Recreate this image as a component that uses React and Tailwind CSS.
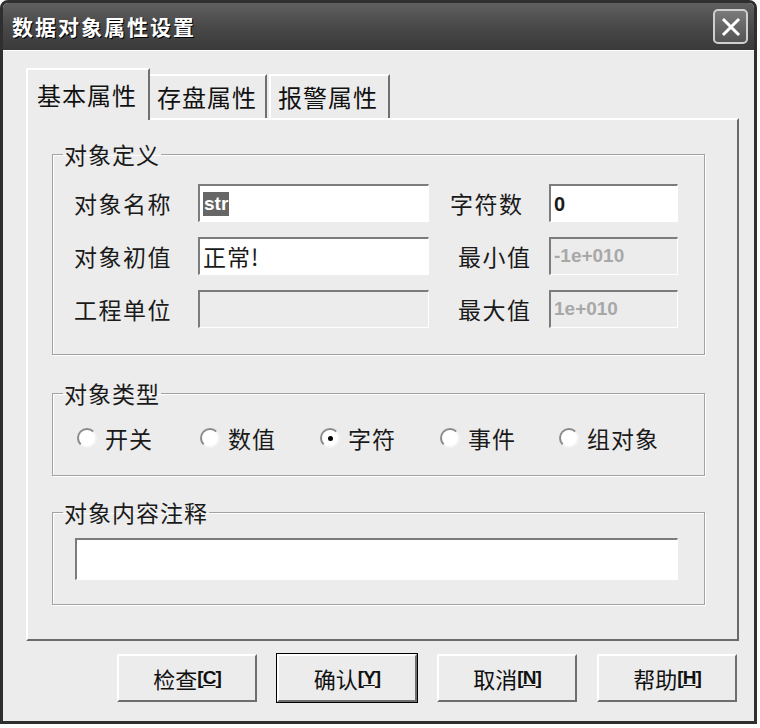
import React from "react";

const cjk = "font-['Noto_Sans_CJK_SC','Noto_Sans',sans-serif]";
const latin = "font-['Liberation_Sans','Noto_Sans_CJK_SC',sans-serif]";

function Field({ width, disabled, children }) {
  return (
    <div
      className={`h-[38px] ${width} flex items-center pl-[3px] border-t-2 border-l-2 border-t-[#7c7c7c] border-l-[#7c7c7c] border-b border-r border-b-white border-r-white ${disabled ? "bg-[#ececec]" : "bg-white"}`}
    >
      {children}
    </div>
  );
}

function Group({ title, className = "", inner = "", children }) {
  return (
    <fieldset
      className={`p-0 border border-[#a2a2a2] shadow-[inset_1px_1px_0_#ffffff,1px_1px_0_#ffffff] ${className}`}
    >
      <legend className="ml-[10px] px-[1px] text-[23px] leading-[28px] tracking-[1px] text-[#1a1a1a]">
        {title}
      </legend>
      <div className={inner}>{children}</div>
    </fieldset>
  );
}

function Radio({ checked, label }) {
  return (
    <div className="flex items-center gap-[8px]">
      <span className="w-[20px] h-[20px] rounded-full bg-white border-2 border-t-[#8a8a8a] border-l-[#8a8a8a] border-r-[#f4f4f4] border-b-[#f4f4f4] flex items-center justify-center">
        {checked && <span className="w-[5px] h-[5px] rounded-full bg-black" />}
      </span>
      <span className="text-[23px] tracking-[1px]">{label}</span>
    </div>
  );
}

function Btn({ label, hot, isDefault }) {
  return (
    <div className={isDefault ? "border border-black" : "border border-transparent"}>
      <div className="w-[140px] h-[48px] flex items-center justify-center bg-[#ececec] border-t-2 border-l-2 border-t-white border-l-white border-b-2 border-r-2 border-b-[#6e6e6e] border-r-[#6e6e6e] text-[22px] text-[#111]">
        <span>{label}</span>
        <span className={`${latin} font-bold text-[19px] tracking-[-1px]`}>
          [<span className="underline">{hot}</span>]
        </span>
      </div>
    </div>
  );
}

export default function App() {
  return (
    <div className={`w-[760px] h-[728px] bg-white ${cjk}`}>
      <div className="w-[757px] h-[724px] flex flex-col border-[3px] border-[#2f2f2f] rounded-t-[8px] overflow-hidden bg-[#ececec]">
        {/* title bar */}
        <div className="h-[47px] shrink-0 flex items-center justify-between pl-[9px] pr-[6px] bg-gradient-to-b from-[#606060] via-[#494949] to-[#3a3a3a]">
          <span className="text-white font-bold text-[21px] tracking-[2px] [text-shadow:1px_1px_0_#000000]">
            数据对象属性设置
          </span>
          <div className="w-[35px] h-[35px] rounded-[5px] border-2 border-[#cfcfcf] bg-gradient-to-b from-[#7a7a7a] to-[#545454] flex items-center justify-center">
            <svg width="22" height="22" viewBox="0 0 22 22">
              <path d="M4 4 L18 18 M18 4 L4 18" stroke="#ffffff" strokeWidth="3" strokeLinecap="square" />
            </svg>
          </div>
        </div>

        {/* body */}
        <div className="flex-1 flex flex-col border-t border-t-white pl-[23px] pr-[16px] pt-[17px]">
          {/* tabs */}
          <div className="flex items-end h-[50px] relative z-10">
            <div className="h-[52px] -mb-[2px] w-[124px] bg-[#ececec] border-t-2 border-l-2 border-t-white border-l-white border-r-2 border-r-[#707070] flex items-center pl-[9px] text-[24px] tracking-[1px] text-[#111]">
              基本属性
            </div>
            <div className="h-[44px] w-[117px] bg-[#ececec] border-t-2 border-t-white border-r-2 border-r-[#707070] flex items-center pl-[7px] text-[24px] tracking-[1px] text-[#111]">
              存盘属性
            </div>
            <div className="h-[44px] w-[121px] ml-[2px] bg-[#ececec] border-t-2 border-l-2 border-t-white border-l-white border-r-2 border-r-[#707070] flex items-center pl-[7px] text-[24px] tracking-[1px] text-[#111]">
              报警属性
            </div>
          </div>

          {/* panel */}
          <div className="w-[713px] h-[523px] border-t-2 border-l-2 border-t-white border-l-white border-b-2 border-r-2 border-b-[#6a6a6a] border-r-[#6a6a6a] pl-[24px] pt-[20px] text-[#1a1a1a]">
            <Group title="对象定义" className="w-[653px] h-[215px]" inner="pl-[21px] pt-[16px]">
              <div className="flex flex-col gap-[15px]">
                <div className="flex items-center">
                  <span className="w-[124px] text-[23px] tracking-[1.5px]">对象名称</span>
                  <Field width="w-[231px]">
                    <span className={`${latin} font-bold text-[19px] leading-[24px] px-[1px] bg-[#666666] text-white`}>str</span>
                  </Field>
                  <span className="w-[120px] pl-[21px] text-[23px] tracking-[1.5px]">字符数</span>
                  <Field width="w-[129px]">
                    <span className={`${latin} font-bold text-[20px]`}>0</span>
                  </Field>
                </div>
                <div className="flex items-center">
                  <span className="w-[124px] text-[23px] tracking-[1.5px]">对象初值</span>
                  <Field width="w-[231px]">
                    <span className="text-[23px] tracking-[1px]">正常!</span>
                  </Field>
                  <span className="w-[120px] pl-[29px] text-[23px] tracking-[1.5px]">最小值</span>
                  <Field width="w-[129px]" disabled>
                    <span className={`${latin} font-bold text-[19px] text-[#a8a8a8]`}>-1e+010</span>
                  </Field>
                </div>
                <div className="flex items-center">
                  <span className="w-[124px] text-[23px] tracking-[1.5px]">工程单位</span>
                  <Field width="w-[231px]" disabled />
                  <span className="w-[120px] pl-[29px] text-[23px] tracking-[1.5px]">最大值</span>
                  <Field width="w-[129px]" disabled>
                    <span className={`${latin} font-bold text-[19px] text-[#a8a8a8]`}>1e+010</span>
                  </Field>
                </div>
              </div>
            </Group>

            <Group title="对象类型" className="w-[653px] h-[97px] mt-[24px]" inner="pl-[24px] pt-[14px]">
              <div className="flex items-center">
                <div className="w-[123px]"><Radio label="开关" /></div>
                <div className="w-[120px]"><Radio label="数值" /></div>
                <div className="w-[120px]"><Radio checked label="字符" /></div>
                <div className="w-[119px]"><Radio label="事件" /></div>
                <div><Radio label="组对象" /></div>
              </div>
            </Group>

            <Group title="对象内容注释" className="w-[653px] h-[107px] mt-[22px]" inner="pl-[22px] pt-[12px]">
              <Field width="w-[603px] h-[42px]" />
            </Group>
          </div>

          {/* buttons */}
          <div className="flex justify-end gap-[18px] mt-[12px]">
            <Btn label="检查" hot="C" />
            <Btn label="确认" hot="Y" isDefault />
            <Btn label="取消" hot="N" />
            <Btn label="帮助" hot="H" />
          </div>
        </div>
      </div>
    </div>
  );
}
